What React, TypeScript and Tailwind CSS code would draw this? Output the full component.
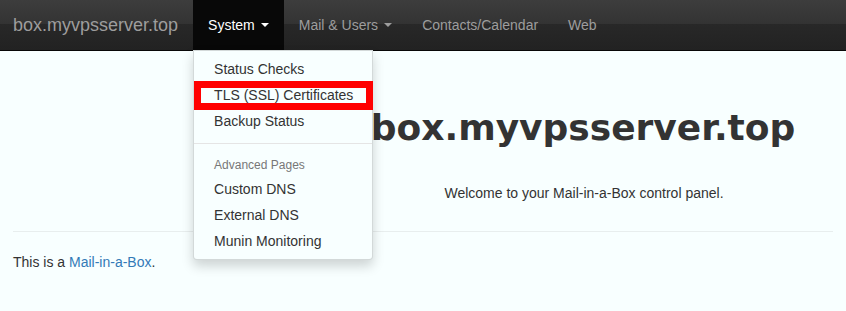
import { useState } from 'react'

const menu = ['Status Checks', 'TLS (SSL) Certificates', 'Backup Status']
const advanced = ['Custom DNS', 'External DNS', 'Munin Monitoring']

function Caret({ color }: { color: string }) {
  return <span className={`ml-[6px] inline-block h-0 w-0 border-x-[4px] border-t-[4px] border-x-transparent align-middle ${color}`} />
}

export default function App() {
  const [open] = useState(true)

  return (
    <div className="relative min-h-[311px] w-[846px] overflow-hidden bg-[#f8ffff] font-['Liberation_Sans',Arial,sans-serif] text-[14px] leading-[20px] text-[#333]">
      {/* Navbar */}
      <nav className="flex h-[51px] border-b border-[#080808] bg-[linear-gradient(to_bottom,#3d3d3d_0,#333_24px,#282828_24px,#222_50px)]">
        <a className="pl-[13px] pr-[15px] py-[15px] text-[18px] leading-[20px] text-[#9d9d9d]">box.myvpsserver.top</a>
        <ul className="flex">
          <li className="relative">
            <a className="flex h-[50px] items-center bg-[#080808] px-[15px] text-white">
              System
              <Caret color="border-t-white" />
            </a>
            {open && (
              <div className="absolute left-0 top-[50px] z-10 w-[180px] rounded-b-[4px] border border-[rgba(0,0,0,0.15)] bg-[#f8ffff] py-[5px] shadow-[0_6px_12px_rgba(0,0,0,0.175)]">
                {menu.map((m) => (
                  <div key={m} className="px-[20px] py-[3px] whitespace-nowrap">{m}</div>
                ))}
                <div className="my-[9px] h-px bg-[#e5e5e5]" />
                <div className="px-[20px] pt-[4px] pb-[2px] text-[12px] leading-[17px] text-[#777]">Advanced Pages</div>
                {advanced.map((m) => (
                  <div key={m} className="px-[20px] py-[3px] whitespace-nowrap">{m}</div>
                ))}
              </div>
            )}
          </li>
          <li>
            <a className="flex h-[50px] items-center px-[15px] text-[#9d9d9d]">
              Mail &amp; Users
              <Caret color="border-t-[#9d9d9d]" />
            </a>
          </li>
          <li>
            <a className="flex h-[50px] items-center px-[15px] text-[#9d9d9d]">Contacts/Calendar</a>
          </li>
          <li>
            <a className="flex h-[50px] items-center px-[15px] text-[#9d9d9d]">Web</a>
          </li>
        </ul>
      </nav>

      {/* Welcome */}
      <div className="ml-[320px] pt-[57px] text-center">
        <h1 className="font-['DejaVu_Sans',sans-serif] text-[36px] font-bold leading-[40px] text-[#333]">box.myvpsserver.top</h1>
        <p className="mt-[35px] pl-[2px]">Welcome to your Mail-in-a-Box control panel.</p>
      </div>

      <div className="px-[13px]">
        <hr className="mt-[28px] border-t border-[#e8eeee]" />
        <p className="mt-[20px]">
          This is a <a className="text-[#337ab7]">Mail-in-a-Box</a>.
        </p>
      </div>

      {/* highlight annotation */}
      <div className="absolute left-[194px] top-[81px] z-20 h-[29px] w-[179px] border-[7px] border-[#ff0000]" />
    </div>
  )
}
